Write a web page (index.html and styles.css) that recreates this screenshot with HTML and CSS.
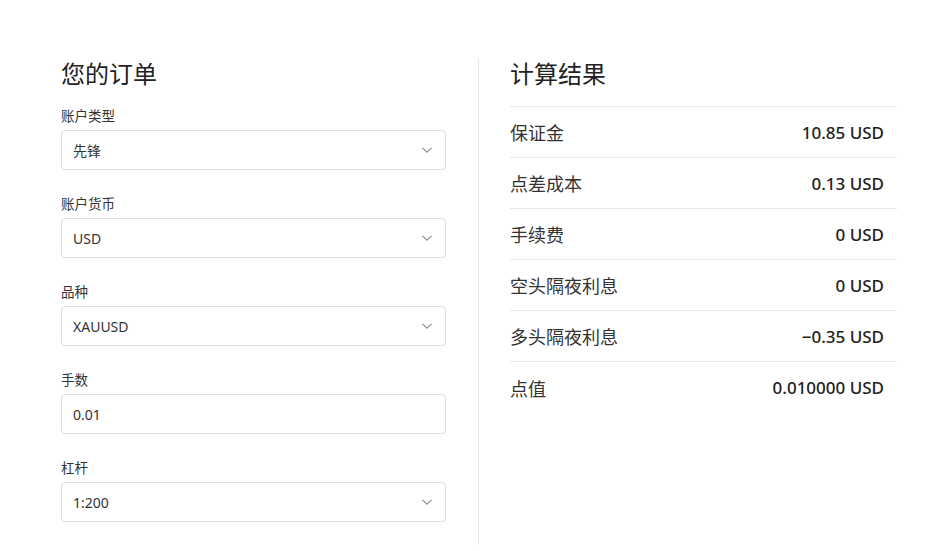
FILE: index.html
```html
<!DOCTYPE html>
<html lang="zh-CN">
<head>
    <meta charset="UTF-8">
    <meta name="viewport" content="width=device-width, initial-scale=1.0">
    <title>保证金计算器</title>
    <link rel="stylesheet" href="styles.css">
</head>
<body>

    <div class="calculator">
        <!-- Order form -->
        <div class="order">
            <h2>您的订单</h2>

            <div class="field">
                <label>账户类型</label>
                <div class="select">
                    <span>先锋</span>
                    <svg class="chevron" width="12" height="8" viewBox="0 0 12 8"><path d="M1.5 1.8l4.5 4.4 4.5-4.4" fill="none" stroke="#888" stroke-width="1.1"/></svg>
                </div>
            </div>

            <div class="field">
                <label>账户货币</label>
                <div class="select">
                    <span>USD</span>
                    <svg class="chevron" width="12" height="8" viewBox="0 0 12 8"><path d="M1.5 1.8l4.5 4.4 4.5-4.4" fill="none" stroke="#888" stroke-width="1.1"/></svg>
                </div>
            </div>

            <div class="field">
                <label>品种</label>
                <div class="select">
                    <span>XAUUSD</span>
                    <svg class="chevron" width="12" height="8" viewBox="0 0 12 8"><path d="M1.5 1.8l4.5 4.4 4.5-4.4" fill="none" stroke="#888" stroke-width="1.1"/></svg>
                </div>
            </div>

            <div class="field">
                <label>手数</label>
                <div class="select">
                    <span>0.01</span>
                </div>
            </div>

            <div class="field">
                <label>杠杆</label>
                <div class="select">
                    <span>1:200</span>
                    <svg class="chevron" width="12" height="8" viewBox="0 0 12 8"><path d="M1.5 1.8l4.5 4.4 4.5-4.4" fill="none" stroke="#888" stroke-width="1.1"/></svg>
                </div>
            </div>
        </div>

        <div class="divider"></div>

        <!-- Results -->
        <div class="results">
            <h2>计算结果</h2>
            <ul class="result-list">
                <li><span>保证金</span><b>10.85 USD</b></li>
                <li><span>点差成本</span><b>0.13 USD</b></li>
                <li><span>手续费</span><b>0 USD</b></li>
                <li><span>空头隔夜利息</span><b>0 USD</b></li>
                <li><span>多头隔夜利息</span><b>&minus;0.35 USD</b></li>
                <li><span>点值</span><b>0.010000 USD</b></li>
            </ul>
        </div>
    </div>

</body>
</html>
```

FILE: styles.css
```css
/* Reset */
* {
    margin: 0;
    padding: 0;
    box-sizing: border-box;
}

body {
    font-family: "Noto Sans", "Noto Sans CJK SC", sans-serif;
    color: #222;
    background-color: #fff;
}

.calculator {
    display: flex;
    padding: 58px 0 0 61px;
}

h2 {
    font-size: 24px;
    line-height: 32px;
    font-weight: 400;
    color: #222;
    margin-bottom: 16px;
}

/* Left column */
.order {
    width: 385px;
    padding-bottom: 23px;
}

.field {
    margin-bottom: 24px;
}

.field:last-child {
    margin-bottom: 0;
}

label {
    display: block;
    font-size: 13.5px;
    line-height: 20px;
    color: #333;
    margin-bottom: 4px;
}

.select {
    height: 40px;
    border: 1px solid #dedede;
    border-radius: 4px;
    display: flex;
    align-items: center;
    justify-content: space-between;
    padding: 0 12px 0 11px;
    font-size: 14px;
    color: #333;
}

.chevron {
    display: block;
}

.divider {
    width: 1px;
    background-color: #e6e6e6;
    margin: 0 31px 0 32px;
}

/* Right column */
.results {
    width: 387px;
}

.result-list {
    list-style: none;
    border-top: 1px solid #e6e6e6;
}

.result-list li {
    height: 51px;
    display: flex;
    align-items: center;
    justify-content: space-between;
    border-bottom: 1px solid #e6e6e6;
    padding-right: 13px;
    font-size: 18px;
    color: #333;
}

.result-list li:last-child {
    border-bottom: none;
}

.result-list b {
    font-size: 17px;
    font-weight: 500;
    color: #222;
}
```
